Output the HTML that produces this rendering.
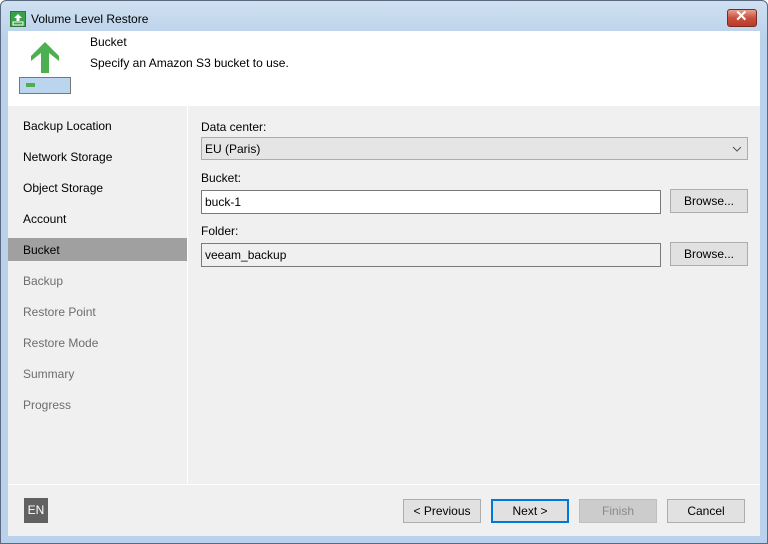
<!DOCTYPE html>
<html><head><meta charset="utf-8"><style>
*{margin:0;padding:0;box-sizing:border-box}
body{width:768px;height:544px;overflow:hidden;font-family:"Liberation Sans",sans-serif;font-size:12px;color:#000;background:#fff}
.win{position:absolute;left:0;top:0;width:768px;height:544px;background:linear-gradient(#cfe0f1,#b9d1ea 40px,#b9d1ea);border:1px solid #5a6a80;border-radius:6px 6px 0 0}
.a{position:absolute}
.t{position:absolute;white-space:nowrap}
.nav{left:23px;font-size:12px}
.dis{color:#6d6d6d}
.btn{position:absolute;height:24px;width:78px;border:1px solid #adadad;background:#e1e1e1;text-align:center;line-height:22px}
.inp{position:absolute;height:24px;border:1px solid #7a7a7a;background:#fff;padding-left:3px;line-height:22px}
</style></head><body>
<div class="win"></div>
<div class="a" style="left:10px;top:11px;width:16px;height:16px;background:#3aa04a;border:1px solid #2a7a36"></div>
<svg class="a" style="left:10px;top:11px" width="16" height="16"><path d="M8 3 L4 7 H6.5 V10 H9.5 V7 H12 Z" fill="#fff"/><rect x="3" y="11" width="10" height="3" fill="none" stroke="#fff"/></svg>
<div class="t" style="left:31px;top:12px;font-size:12px">Volume Level Restore</div>
<div class="a" style="left:727px;top:9px;width:30px;height:18px;border:1px solid #7a2a20;border-radius:3px;background:linear-gradient(#e8a090,#c8503c 50%,#b83a28)"></div>
<div class="t" style="left:735px;top:7px;color:#fff;font-size:15px;font-weight:bold">✕</div>
<div class="a" style="left:8px;top:31px;width:752px;height:505px;background:#f0f0f0"></div>
<div class="a" style="left:8px;top:31px;width:752px;height:75px;background:#fff"></div>
<svg class="a" style="left:19px;top:42px" width="54" height="54">
<path d="M26 0 L12 14 V19 L22 11 V31 H30 V11 L40 19 V14 Z" fill="#4caf50"/>
<rect x="0.5" y="35.5" width="51" height="16" fill="#bcd5ee" stroke="#777"/>
<rect x="7" y="41" width="9" height="4" fill="#4caf50"/>
</svg>
<div class="t" style="left:90px;top:35px">Bucket</div>
<div class="t" style="left:90px;top:56px">Specify an Amazon S3 bucket to use.</div>
<div class="a" style="left:187px;top:106px;width:1px;height:378px;background:#fff"></div>
<div class="a" style="left:8px;top:484px;width:752px;height:1px;background:#fff"></div>
<div class="a" style="left:8px;top:238px;width:179px;height:23px;background:#a0a0a0"></div>
<div class="t nav" style="top:119px">Backup Location</div>
<div class="t nav" style="top:150px">Network Storage</div>
<div class="t nav" style="top:181px">Object Storage</div>
<div class="t nav" style="top:212px">Account</div>
<div class="t nav" style="top:243px">Bucket</div>
<div class="t nav dis" style="top:274px">Backup</div>
<div class="t nav dis" style="top:305px">Restore Point</div>
<div class="t nav dis" style="top:336px">Restore Mode</div>
<div class="t nav dis" style="top:367px">Summary</div>
<div class="t nav dis" style="top:398px">Progress</div>
<div class="t" style="left:201px;top:120px">Data center:</div>
<div class="inp" style="left:201px;top:137px;width:547px;height:23px;background:#e5e5e5;border-color:#acacac">EU (Paris)</div>
<svg class="a" style="left:732px;top:145px" width="10" height="8"><path d="M1 2 L5 6 L9 2" fill="none" stroke="#555"/></svg>
<div class="t" style="left:201px;top:171px">Bucket:</div>
<div class="inp" style="left:201px;top:190px;width:460px">buck-1</div>
<div class="btn" style="left:670px;top:189px">Browse...</div>
<div class="t" style="left:201px;top:224px">Folder:</div>
<div class="inp" style="left:201px;top:243px;width:460px;background:#f0f0f0">veeam_backup</div>
<div class="btn" style="left:670px;top:242px">Browse...</div>
<div class="a" style="left:24px;top:498px;width:24px;height:25px;background:#616161;color:#fff;text-align:center;line-height:25px">EN</div>
<div class="btn" style="left:403px;top:499px">&lt; Previous</div>
<div class="btn" style="left:491px;top:499px;border:2px solid #0078d7;line-height:20px">Next &gt;</div>
<div class="btn" style="left:579px;top:499px;background:#cccccc;border-color:#bfbfbf;color:#8a8a8a">Finish</div>
<div class="btn" style="left:667px;top:499px">Cancel</div>
</body></html>
